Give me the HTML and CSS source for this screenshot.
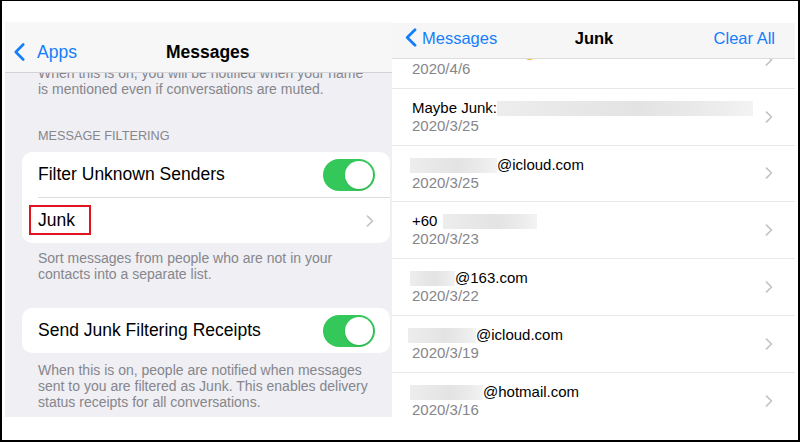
FILE: index.html
```html
<!DOCTYPE html>
<html lang="en">
<head>
<meta charset="utf-8">
<title>Messages – Junk</title>
<link rel="stylesheet" href="styles.css">
</head>
<body>
<div class="frame">
  <section class="settings">
    <header class="nav">
      <a class="back">
        <svg class="back-chev" width="11" height="18" viewBox="0 0 11 18"><path d="M9.2 1.5 L1.8 9 L9.2 16.5" fill="none" stroke="#147efb" stroke-width="2.6" stroke-linecap="round" stroke-linejoin="round"/></svg>
        <span>Apps</span>
      </a>
      <h1 class="nav-title">Messages</h1>
    </header>
    <div class="scroll">
      <p class="note lead">When this is on, you will be notified when your name<br>is mentioned even if conversations are muted.</p>
      <h2 class="group-title">MESSAGE FILTERING</h2>
      <div class="card">
        <div class="row">
          <span>Filter Unknown Senders</span>
          <span class="toggle"><span class="knob"></span></span>
        </div>
        <div class="row">
          <span>Junk</span>
          <span class="mark"></span>
          <svg class="chev" width="8" height="12" viewBox="0 0 8 12"><path d="M1.5 1.2 L6.5 6 L1.5 10.8" fill="none" stroke="#c4c4c8" stroke-width="1.7" stroke-linecap="round" stroke-linejoin="round"/></svg>
        </div>
      </div>
      <p class="note after-one">Sort messages from people who are not in your<br>contacts into a separate list.</p>
      <div class="card card-two">
        <div class="row">
          <span>Send Junk Filtering Receipts</span>
          <span class="toggle"><span class="knob"></span></span>
        </div>
      </div>
      <p class="note after-two">When this is on, people are notified when messages<br>sent to you are filtered as Junk. This enables delivery<br>status receipts for all conversations.</p>
    </div>
  </section>

  <section class="junk">
    <header class="nav2">
      <a class="back2">
        <svg width="12" height="19" viewBox="0 0 12 19"><path d="M10 1.7 L2.2 9.5 L10 17.3" fill="none" stroke="#147efb" stroke-width="2.8" stroke-linecap="round" stroke-linejoin="round"/></svg>
        <span>Messages</span>
      </a>
      <h1 class="nav2-title">Junk</h1>
      <a class="clear">Clear All</a>
    </header>
    <div class="list">
      <div class="msg first">
        <div class="text">
          <div class="from"><span class="blur" style="width:108px"></span><span class="emoji"></span></div>
          <div class="date">2020/4/6</div>
        </div>
        <svg class="chev" width="8" height="12" viewBox="0 0 8 12"><path d="M1.5 1.2 L6.5 6 L1.5 10.8" fill="none" stroke="#c4c4c8" stroke-width="1.7" stroke-linecap="round" stroke-linejoin="round"/></svg>
      </div>
      <div class="msg">
        <div class="text">
          <div class="from">Maybe Junk:<span class="blur" style="width:256px"></span></div>
          <div class="date">2020/3/25</div>
        </div>
        <svg class="chev" width="8" height="12" viewBox="0 0 8 12"><path d="M1.5 1.2 L6.5 6 L1.5 10.8" fill="none" stroke="#c4c4c8" stroke-width="1.7" stroke-linecap="round" stroke-linejoin="round"/></svg>
      </div>
      <div class="msg">
        <div class="text">
          <div class="from"><span class="blur lead-blur" style="width:87px"></span>@icloud.com</div>
          <div class="date">2020/3/25</div>
        </div>
        <svg class="chev" width="8" height="12" viewBox="0 0 8 12"><path d="M1.5 1.2 L6.5 6 L1.5 10.8" fill="none" stroke="#c4c4c8" stroke-width="1.7" stroke-linecap="round" stroke-linejoin="round"/></svg>
      </div>
      <div class="msg">
        <div class="text">
          <div class="from">+60<span class="blur gap-blur" style="width:94px"></span></div>
          <div class="date">2020/3/23</div>
        </div>
        <svg class="chev" width="8" height="12" viewBox="0 0 8 12"><path d="M1.5 1.2 L6.5 6 L1.5 10.8" fill="none" stroke="#c4c4c8" stroke-width="1.7" stroke-linecap="round" stroke-linejoin="round"/></svg>
      </div>
      <div class="msg">
        <div class="text">
          <div class="from"><span class="blur lead-blur" style="width:45px"></span>@163.com</div>
          <div class="date">2020/3/22</div>
        </div>
        <svg class="chev" width="8" height="12" viewBox="0 0 8 12"><path d="M1.5 1.2 L6.5 6 L1.5 10.8" fill="none" stroke="#c4c4c8" stroke-width="1.7" stroke-linecap="round" stroke-linejoin="round"/></svg>
      </div>
      <div class="msg">
        <div class="text">
          <div class="from"><span class="blur lead-blur-wide" style="width:68px"></span>@icloud.com</div>
          <div class="date">2020/3/19</div>
        </div>
        <svg class="chev" width="8" height="12" viewBox="0 0 8 12"><path d="M1.5 1.2 L6.5 6 L1.5 10.8" fill="none" stroke="#c4c4c8" stroke-width="1.7" stroke-linecap="round" stroke-linejoin="round"/></svg>
      </div>
      <div class="msg">
        <div class="text">
          <div class="from"><span class="blur lead-blur" style="width:73px"></span>@hotmail.com</div>
          <div class="date">2020/3/16</div>
        </div>
        <svg class="chev" width="8" height="12" viewBox="0 0 8 12"><path d="M1.5 1.2 L6.5 6 L1.5 10.8" fill="none" stroke="#c4c4c8" stroke-width="1.7" stroke-linecap="round" stroke-linejoin="round"/></svg>
      </div>
    </div>
  </section>
</div>
</body>
</html>
```

FILE: styles.css
```css
* {
  box-sizing: border-box;
  margin: 0;
  padding: 0;
}

body {
  background: #fff;
  font-family: "Liberation Sans", Arial, sans-serif;
}

.frame {
  width: 800px;
  height: 442px;
  border: 2px solid #000;
  border-top-width: 1px;
  background: #fff;
  display: flex;
  align-items: flex-start;
  padding: 21px 0 0 3px;
  overflow: hidden;
}

/* ---------- left: Settings > Messages ---------- */
.settings {
  width: 387px;
  height: 395px;
  flex: none;
  background: #efeff4;
  display: flex;
  flex-direction: column;
  overflow: hidden;
}

.nav {
  flex: none;
  height: 51px;
  background: #f7f7f8;
  border-bottom: 1px solid #d3d3d7;
  display: flex;
  align-items: center;
  padding: 10px 0 0 9px;
}

.back {
  display: flex;
  align-items: center;
  gap: 12px;
  color: #147efb;
  font-size: 17.5px;
  line-height: 20px;
}

.nav-title {
  margin-left: 89px;
  font-size: 17.5px;
  line-height: 20px;
  font-weight: bold;
  color: #000;
}

.scroll {
  flex: 1;
  overflow: hidden;
}

.note {
  font-size: 14px;
  line-height: 16px;
  color: #86868b;
  padding-left: 33px;
}

.note.lead {
  margin-top: -8px;
}

.note.after-one {
  margin-top: 7px;
}

.note.after-two {
  margin-top: 9px;
}

.group-title {
  font-size: 12.7px;
  line-height: 16px;
  font-weight: normal;
  color: #86868b;
  margin: 31px 0 8px 33px;
}

.card {
  background: #fff;
  border-radius: 10px;
  margin: 0 2px 0 17px;
}

.card-two {
  margin-top: 26px;
}

.row {
  position: relative;
  height: 45px;
  margin-left: 16px;
  padding-right: 15px;
  display: flex;
  align-items: center;
  justify-content: space-between;
  font-size: 17.5px;
  color: #000;
}

.row + .row {
  height: 46px;
  border-top: 1px solid #dcdce0;
}

.row .chev {
  margin-right: 1px;
}

.toggle {
  width: 52px;
  height: 32px;
  border-radius: 16px;
  background: #34c759;
  display: flex;
  justify-content: flex-end;
  align-items: center;
  padding: 2px;
}

.knob {
  width: 28px;
  height: 28px;
  border-radius: 50%;
  background: #fff;
  box-shadow: 0 1px 2px rgba(0, 0, 0, 0.12);
}

/* red annotation box around "Junk" */
.mark {
  position: absolute;
  left: -9px;
  top: 7px;
  width: 62px;
  height: 30px;
  border: 2px solid #e0141e;
}

/* ---------- right: Junk list ---------- */
.junk {
  width: 403px;
  height: 394px;
  margin-top: 1px;
  flex: none;
  background: #fff;
  display: flex;
  flex-direction: column;
  overflow: hidden;
}

.nav2 {
  flex: none;
  height: 36px;
  background: #f6f6f7;
  border-bottom: 1px solid #dcdcdc;
  display: grid;
  grid-template-columns: 1fr auto 1fr;
  align-items: center;
  padding: 0 12px 6px 13px;
  font-size: 16.5px;
  line-height: 20px;
}

.back2 {
  display: flex;
  align-items: center;
  gap: 5px;
  color: #147efb;
  justify-self: start;
}

.nav2-title {
  font-size: 16.5px;
  line-height: 20px;
  font-weight: bold;
  color: #000;
}

.clear {
  justify-self: end;
  margin-right: 8px;
  color: #147efb;
}

.list {
  flex: 1;
  overflow: hidden;
}

.msg {
  height: 56.8px;
  border-bottom: 1px solid #e8e8e8;
  padding: 10px 22px 10px 20px;
  display: flex;
  align-items: center;
  justify-content: space-between;
}

.msg.first {
  margin-top: -27px;
}

.text {
  font-size: 15px;
  line-height: 18px;
}

.from {
  color: #000;
  white-space: nowrap;
}

.date {
  color: #86868b;
}

.blur {
  display: inline-block;
  height: 15px;
  vertical-align: -3px;
  background: linear-gradient(90deg, #ededed 0%, #e3e3e3 55%, #ececec 85%, #f3f3f3 100%);
}

.lead-blur {
  margin-left: -2px;
}

.lead-blur-wide {
  margin-left: -4px;
}

.gap-blur {
  margin-left: 6px;
}

.emoji {
  display: inline-block;
  width: 13px;
  height: 13px;
  margin-left: 3px;
  border-radius: 50%;
  background: #f5b52a;
  vertical-align: -5px;
}
```
